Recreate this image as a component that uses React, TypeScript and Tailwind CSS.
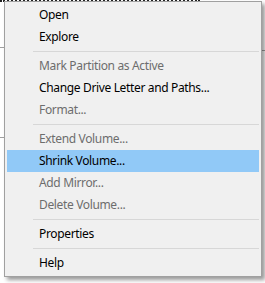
import React from "react";

type Item = { label: string; disabled?: boolean; active?: boolean } | "sep";

const items: Item[] = [
  { label: "Open" },
  { label: "Explore" },
  "sep",
  { label: "Mark Partition as Active", disabled: true },
  { label: "Change Drive Letter and Paths..." },
  { label: "Format...", disabled: true },
  "sep",
  { label: "Extend Volume...", disabled: true },
  { label: "Shrink Volume...", active: true },
  { label: "Add Mirror...", disabled: true },
  { label: "Delete Volume...", disabled: true },
  "sep",
  { label: "Properties" },
  "sep",
  { label: "Help" },
];

const App = () => {
  return (
    <div className="relative h-[283px] w-[265px] overflow-hidden bg-white font-['Noto_Sans',sans-serif]">
      {/* disk map behind the menu */}
      <div className="absolute left-0 top-0 h-[2px] w-[200px] border-t-2 border-dotted border-[#222]" />
      <div className="absolute left-0 top-[47px] h-px w-[4px] bg-[#a0a0a0]" />
      <div className="absolute left-0 top-[137px] h-px w-[4px] bg-[#a0a0a0]" />
      <div className="absolute right-0 top-[50px] h-px w-[4px] bg-[#a0a0a0]" />

      <div className="relative ml-[4px] mt-[1px] w-[258px] border border-[#a0a0a0] bg-[#f0f0f0] px-[2px] py-[2px] shadow-[3px_3px_4px_rgba(0,0,0,0.4)]">
        {items.map((it, i) =>
          it === "sep" ? (
            <div key={i} className="flex h-[7px] items-center pl-[26px]">
              <div className="h-px w-full bg-[#d7d7d7]" />
            </div>
          ) : (
            <div
              key={i}
              className={
                "flex h-[22px] items-center pl-[32px] text-[12px] tracking-[-0.35px] " +
                (it.active ? "bg-[#91c9f7] " : "") +
                (it.disabled ? "text-[#6d6d6d]" : "text-black")
              }
            >
              {it.label}
            </div>
          )
        )}
      </div>
    </div>
  );
};

export default App;
